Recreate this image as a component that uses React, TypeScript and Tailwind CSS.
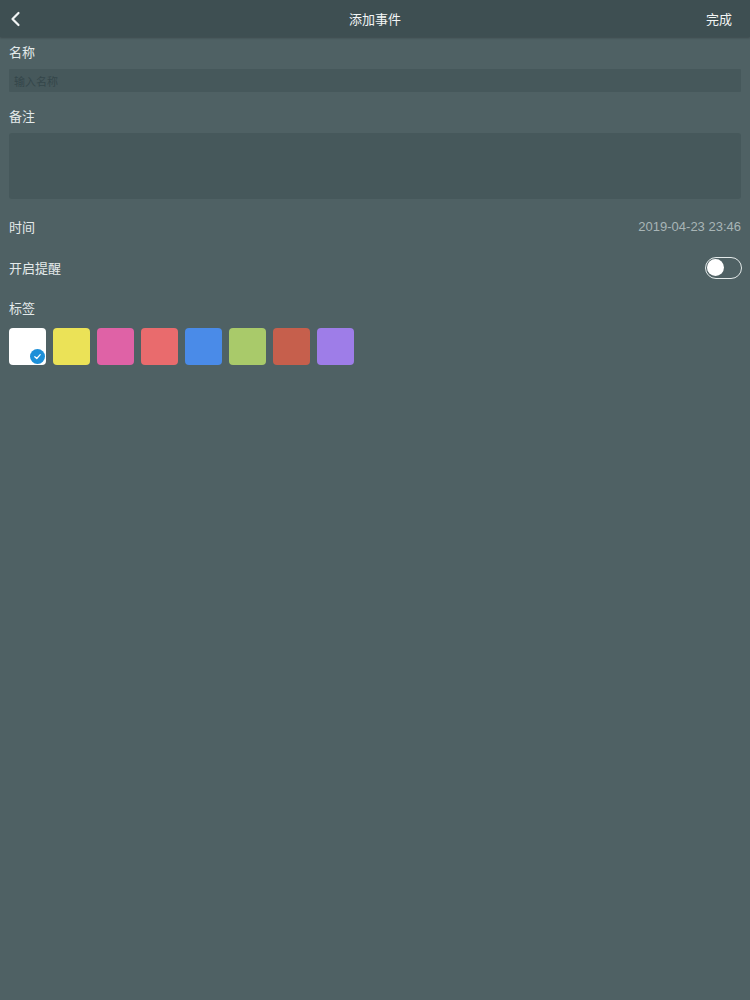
import { useState } from "react";

const font = { fontFamily: '"Noto Sans CJK SC", "Liberation Sans", sans-serif' };

const colors = [
  "bg-white",
  "bg-[#ebe257]",
  "bg-[#df62a6]",
  "bg-[#e96b6d]",
  "bg-[#4a8be8]",
  "bg-[#a9ca6a]",
  "bg-[#c65f4c]",
  "bg-[#9e7de8]",
];

export default function App() {
  const [picked, setPicked] = useState(0);
  const [remind, setRemind] = useState(false);

  return (
    <div className="min-h-screen w-[750px] bg-[#4f6164] text-[13px] text-[#e4eaea]" style={font}>
      <div className="h-[37px] bg-[#3e4f52] flex items-center justify-between px-[9px] shadow-[0_1px_2px_rgba(0,0,0,0.25)] relative">
        <svg width="12" height="16" viewBox="0 0 12 16" className="ml-[1px]">
          <path d="M8.5 2 L2.5 8 L8.5 14" fill="none" stroke="#f2f5f5" strokeWidth="2.2" strokeLinecap="round" strokeLinejoin="round" />
        </svg>
        <div className="absolute left-0 right-0 text-center pointer-events-none text-[#f2f5f5]">添加事件</div>
        <div className="text-[#f2f5f5] mr-[9px]">完成</div>
      </div>

      <div className="px-[9px]">
        <div className="h-[32px] leading-[30px]">名称</div>
        <input
          placeholder="输入名称"
          className="w-full h-[23px] bg-[#46585b] px-[5px] text-[11px] outline-none placeholder:text-[#34464a] rounded-[1px]"
        />

        <div className="mt-[13px] h-[28px] leading-[22px]">备注</div>
        <textarea className="block w-full h-[66px] bg-[#46585b] rounded-[3px] resize-none outline-none" />

        <div className="flex items-center justify-between mt-[15px] h-[26px]">
          <span>时间</span>
          <span className="text-[#a8b5b6]" style={{ fontFamily: '"Liberation Sans", sans-serif' }}>
            2019-04-23 23:46
          </span>
        </div>

        <div className="flex items-center justify-between mt-[15px] h-[26px]">
          <span>开启提醒</span>
          <button
            onClick={() => setRemind(!remind)}
            className="w-[37px] h-[22px] rounded-full border-[1.5px] border-[#e4eaea] relative -mr-[1px]"
          >
            <span className="absolute top-[1px] left-[1px] w-[17px] h-[17px] rounded-full bg-white" />
          </button>
        </div>

        <div className="mt-[14px] h-[26px] leading-[26px]">标签</div>
        <div className="flex gap-[7px] mt-[7px]">
          {colors.map((c, i) => (
            <div
              key={c}
              onClick={() => setPicked(i)}
              className={`${c} w-[37px] h-[37px] rounded-[4px] relative`}
            >
              {picked === i && (
                <div className="absolute right-[1px] bottom-[1px] w-[15px] h-[15px] rounded-full bg-[#1c8fd8] flex items-center justify-center">
                  <svg width="9" height="9" viewBox="0 0 10 10">
                    <path d="M2 5.2 L4.2 7.2 L8 3" fill="none" stroke="#fff" strokeWidth="1.4" strokeLinecap="round" strokeLinejoin="round" />
                  </svg>
                </div>
              )}
            </div>
          ))}
        </div>
      </div>
    </div>
  );
}
